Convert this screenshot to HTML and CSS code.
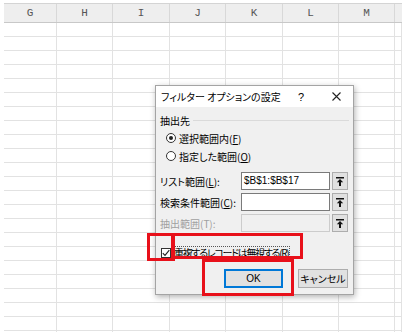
FILE: index.html
```html
<!DOCTYPE html>
<html lang="ja">
<head>
    <meta charset="UTF-8">
    <meta name="viewport" content="width=device-width, initial-scale=1.0">
    <title>フィルター オプションの設定</title>
    <link rel="stylesheet" href="styles.css">
</head>
<body>

<div class="sheet">
    <div class="colhead">
        <div class="hcell c1">G</div>
        <div class="hcell c2">H</div>
        <div class="hcell c3">I</div>
        <div class="hcell c2">J</div>
        <div class="hcell c3">K</div>
        <div class="hcell c2">L</div>
        <div class="hcell c2">M</div>
        <div class="hcell last"></div>
    </div>
    <div class="grid">
        <div class="col c1"></div>
        <div class="col c2"></div>
        <div class="col c3"></div>
        <div class="col c2"></div>
        <div class="col c3"></div>
        <div class="col c2"></div>
        <div class="col c2"></div>
        <div class="col last"></div>
    </div>
</div>

<div class="dialog">
    <div class="titlebar">
        <span class="title">フィルター オプションの設定</span>
        <span class="help">?</span>
        <span class="close">
            <svg width="9" height="9" viewBox="0 0 9 9"><path d="M0.5 0.5L8.5 8.5M8.5 0.5L0.5 8.5" stroke="#222" stroke-width="1.1" fill="none"/></svg>
        </span>
    </div>

    <div class="body">
        <div class="group">抽出先</div>

        <label class="option">
            <span class="radio checked"></span>
            <span>選択範囲内(<u>F</u>)</span>
        </label>
        <label class="option">
            <span class="radio"></span>
            <span>指定した範囲(<u>O</u>)</span>
        </label>

        <div class="field first">
            <span class="flabel">リスト範囲(<u>L</u>):</span>
            <span class="input">$B$1:$B$17</span>
            <span class="pick"><svg width="8" height="9" viewBox="0 0 8 9"><path d="M0 0.75h8" stroke="#111" stroke-width="1.5"/><path d="M4 2L0.8 5.2h2.2V9h2V5.2h2.2z" fill="#111"/></svg></span>
        </div>
        <div class="field">
            <span class="flabel">検索条件範囲(<u>C</u>):</span>
            <span class="input"></span>
            <span class="pick"><svg width="8" height="9" viewBox="0 0 8 9"><path d="M0 0.75h8" stroke="#111" stroke-width="1.5"/><path d="M4 2L0.8 5.2h2.2V9h2V5.2h2.2z" fill="#111"/></svg></span>
        </div>
        <div class="field disabled">
            <span class="flabel">抽出範囲(T):</span>
            <span class="input"></span>
            <span class="pick"><svg width="8" height="9" viewBox="0 0 8 9"><path d="M0 0.75h8" stroke="#111" stroke-width="1.5"/><path d="M4 2L0.8 5.2h2.2V9h2V5.2h2.2z" fill="#111"/></svg></span>
        </div>

        <label class="check">
            <span class="box"><svg width="8" height="8" viewBox="0 0 8 8"><path d="M0.8 4.2L3 6.4L7.3 1.2" stroke="#222" stroke-width="1.1" fill="none"/></svg></span>
            <span class="focus">重複するレコードは無視する(<u>R</u>)</span>
        </label>

        <div class="buttons">
            <button class="btn default">OK</button>
            <button class="btn cancel">キャンセル</button>
        </div>
    </div>
</div>

<!-- red marks drawn over the screenshot -->
<div class="mark mark-box"></div>
<div class="mark mark-text"></div>
<div class="mark mark-ok"></div>

</body>
</html>
```

FILE: styles.css
```css
body {
    margin: 0;
    background-color: #fff;
    font-family: 'Noto Sans CJK JP', 'Noto Sans', sans-serif;
    width: 411px;
    height: 332px;
    overflow: hidden;
    position: relative;
}

.sheet {
    margin: 3px 0 0 4px;
    width: 398px;
}

.colhead {
    display: flex;
    height: 20px;
    box-sizing: border-box;
    background-color: #eeeeee;
    border-top: 1px solid #d4d4d4;
    border-bottom: 1px solid #c8c8c8;
}

.hcell {
    box-sizing: border-box;
    border-right: 1px solid #d8d8d8;
    text-align: center;
    font-family: 'Liberation Mono', monospace;
    font-size: 11px;
    line-height: 18px;
    color: #555;
}

.c1 { width: 53px; }
.c2 { width: 56px; }
.c3 { width: 57px; }
.last { flex: 1; border-right: none; }

.grid {
    display: flex;
    height: 309px;
    background-image: linear-gradient(to bottom, transparent 13px, #e2e2e2 13px);
    background-size: 100% 14px;
}

.col {
    box-sizing: border-box;
    border-right: 1px solid #e2e2e2;
}

.dialog {
    position: absolute;
    left: 155px;
    top: 85px;
    width: 199px;
    height: 210px;
    box-sizing: border-box;
    border: 1px solid #a4a4a4;
    background-color: #f0f0f0;
    box-shadow: 1px 2px 6px rgba(0, 0, 0, 0.3);
    font-size: 10px;
    font-feature-settings: 'palt';
    color: #000;
}

.titlebar {
    display: flex;
    align-items: center;
    height: 21px;
    background-color: #fff;
    padding: 0 6px 0 5px;
}

.title {
    flex: 1;
}

.help {
    width: 22px;
    text-align: center;
    font-family: 'Liberation Sans', sans-serif;
    font-size: 11px;
    margin-right: 13px;
}

.close {
    width: 22px;
    display: flex;
    justify-content: center;
}

.body {
    padding: 0 4px 0 4px;
}

.group {
    display: flex;
    align-items: center;
    height: 12px;
    margin-top: 7px;
}

.group::after {
    content: '';
    flex: 1;
    margin: 0 0 0 3px;
    border-top: 1px solid #dadada;
}

.option {
    display: flex;
    align-items: center;
    height: 14px;
    margin: 4px 0 0 6px;
}

.option:first-of-type {
    margin-top: 5px;
}

.radio {
    width: 10px;
    height: 10px;
    box-sizing: border-box;
    border: 1px solid #333;
    border-radius: 50%;
    background-color: #fff;
    margin-right: 3px;
    display: flex;
    align-items: center;
    justify-content: center;
}

.radio.checked::after {
    content: '';
    width: 4px;
    height: 4px;
    border-radius: 50%;
    background-color: #222;
}

.field {
    display: flex;
    align-items: center;
    height: 18px;
    margin-top: 3px;
}

.field.first {
    margin-top: 9px;
}

.flabel {
    width: 81px;
}

.input {
    width: 89px;
    height: 18px;
    box-sizing: border-box;
    border: 1px solid #7a7a7a;
    background-color: #fff;
    padding-left: 2px;
    font-family: 'Liberation Sans', sans-serif;
    font-size: 10px;
    line-height: 16px;
}

.pick {
    width: 16px;
    height: 18px;
    box-sizing: border-box;
    margin-left: 2px;
    border: 1px solid #adadad;
    background-color: #e1e1e1;
    display: flex;
    align-items: center;
    justify-content: center;
}

.disabled .flabel {
    color: #a0a0a0;
}

.disabled .input {
    border-color: #cccccc;
    background-color: #f0f0f0;
}

.check {
    display: flex;
    align-items: center;
    height: 13px;
    margin: 14px 0 0 1px;
}

.box {
    width: 10px;
    height: 10px;
    box-sizing: border-box;
    border: 1px solid #333;
    background-color: #fff;
    display: flex;
    align-items: center;
    justify-content: center;
    margin-right: 1px;
}

.focus {
    border: 1px dotted #555;
    padding: 0 1px;
    line-height: 11px;
    letter-spacing: -1.3px;
    white-space: nowrap;
}

.buttons {
    display: flex;
    justify-content: flex-end;
    gap: 15px;
    margin-top: 10px;
    padding-right: 1px;
}

.btn {
    height: 19px;
    box-sizing: border-box;
    border: 1px solid #adadad;
    background-color: #e1e1e1;
    font-family: 'Noto Sans CJK JP', sans-serif;
    font-feature-settings: 'palt';
    font-size: 10px;
    white-space: nowrap;
    padding: 0;
    color: #000;
}

.btn.default {
    width: 59px;
    border: 1px solid #0078d7;
    box-shadow: inset 0 0 0 1px #0078d7;
    font-family: 'Liberation Sans', sans-serif;
}

.btn.cancel {
    width: 50px;
}

.mark {
    position: absolute;
    box-sizing: border-box;
    border: 3px solid #e8101a;
}

.mark-box {
    left: 147px;
    top: 233px;
    width: 28px;
    height: 28px;
}

.mark-text {
    left: 171px;
    top: 233px;
    width: 132px;
    height: 26px;
}

.mark-ok {
    left: 202px;
    top: 259px;
    width: 92px;
    height: 37px;
}
```
